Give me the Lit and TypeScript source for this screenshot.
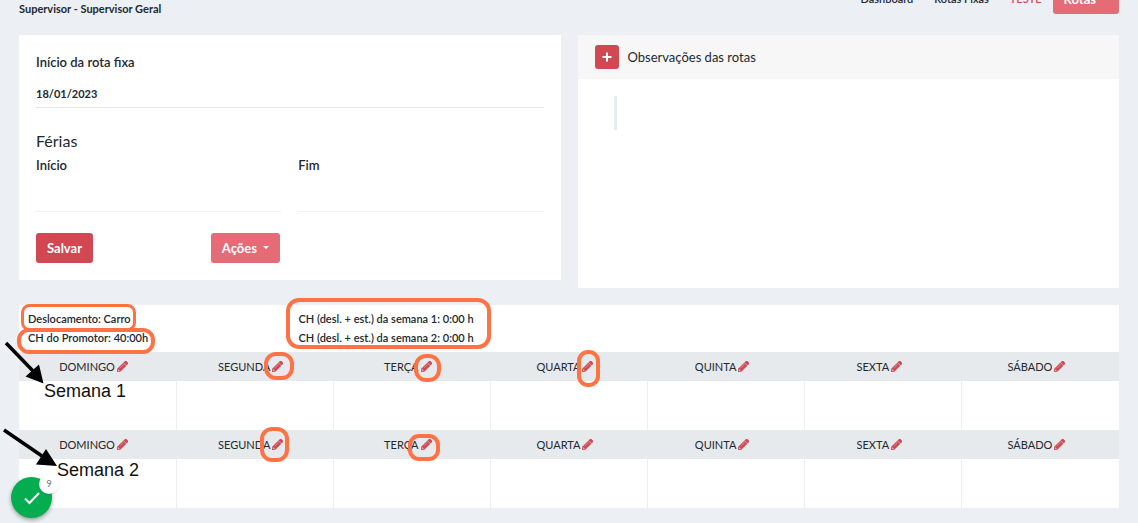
import { LitElement, html, css, svg } from "lit";
import { customElement } from "lit/decorators.js";

const DAYS = ["DOMINGO", "SEGUNDA", "TERÇA", "QUARTA", "QUINTA", "SEXTA", "SÁBADO"];

// Highlight rings: x, y, width, height, radius, stroke
const RINGS = [
  [22.5, 305.5, 112, 24, 7, 3],
  [19, 330, 134, 22, 10, 4],
  [288, 300, 201, 47, 11, 4],
  [266, 354, 26, 24, 10, 4],
  [416, 356, 23, 24, 10, 4],
  [579, 352, 19, 33, 9, 4],
  [262, 429, 25, 31, 10, 4],
  [410, 436, 28, 23, 9, 4],
];

const pencil = svg`<svg class="pencil" viewBox="0 0 512 512" aria-hidden="true"><path fill="currentColor" d="M498 142l-46 46c-5 5-12 5-17 0L324 77c-5-5-5-12 0-17l46-46c19-19 49-19 68 0l60 60c19 19 19 49 0 68zM284 100L22 362 .4 484c-3 16 11 31 28 28l121-21 263-263c5-5 5-12 0-17L301 100c-5-5-12-5-17 0zM124 340c-6-6-6-14 0-20l154-154c6-6 14-6 20 0s6 14 0 20L144 340c-6 5-15 5-20 0zM88 424h48v36l-64 12-32-32 12-64h36z"/></svg>`;

@customElement("app-root")
export class AppRoot extends LitElement {
  static styles = css`
    * { box-sizing: border-box; }
    :host {
      display: block;
      position: relative;
      min-height: 100vh;
      overflow: hidden;
      background: #ecf0f5;
      color: #23282d;
      font-family: Lato, "Noto Sans", sans-serif;
      font-size: 12px;
      line-height: 16px;
    }
    button, input { font: inherit; color: inherit; }
    button { cursor: pointer; }
    .page { padding: 0 19px 16px; }
    .top {
      display: flex;
      justify-content: space-between;
      align-items: flex-end;
      margin-top: -16px;
      height: 33px;
      margin-bottom: 18px;
    }
    .title { margin: 0; font-size: 11px; line-height: 16px; font-weight: 700; }
    .nav { display: flex; align-items: center; align-self: flex-start; }
    .crumbs {
      display: flex;
      gap: 9px;
      margin: 0 11px 0 0;
      padding: 0;
      list-style: none;
      font-size: 11px;
      line-height: 18px;
      font-weight: 600;
    }
    .crumbs a { color: inherit; text-decoration: none; }
    .crumbs .current { color: #d14853; }
    .dot { color: #b8bfc8; font-weight: 400; }
    .btn {
      display: inline-flex;
      align-items: center;
      justify-content: center;
      height: 30px;
      min-width: 57px;
      padding: 0 11px;
      border: 0;
      border-radius: 3px;
      background: #d14853;
      color: #fff;
      font-size: 13px;
      font-weight: 700;
    }
    .btn.light { background: #e56b76; }
    .caret {
      margin-left: 6px;
      margin-bottom: 2px;
      border: 3px solid transparent;
      border-top-color: currentColor;
      border-bottom: 0;
    }
    .cards {
      display: grid;
      grid-template-columns: 1fr 1fr;
      gap: 17px;
      align-items: start;
    }
    .card { background: #fff; }
    .form { padding: 19px 17px 17px; }
    .field { display: flex; flex-direction: column; }
    .field label { font-size: 13px; font-weight: 600; }
    .field input {
      width: 100%;
      min-width: 0;
      height: 28px;
      margin-top: 10px;
      padding: 0;
      border: 0;
      border-bottom: 1px solid #e6e8eb;
      background: none;
      font-size: 11px;
      font-weight: 700;
      outline: 0;
    }
    .subtitle { margin: 23px 0 6px; font-size: 16px; line-height: 20px; font-weight: 400; }
    .pair { display: grid; grid-template-columns: 1fr 1fr; gap: 17px; }
    .pair .field input { height: 29px; border-color: #f1f2f4; }
    .actions {
      display: grid;
      grid-template-columns: repeat(3, 1fr);
      gap: 17px;
      justify-items: start;
      margin-top: 21px;
    }
    .notes { height: 253px; }
    .notes-head {
      display: flex;
      align-items: center;
      gap: 9px;
      height: 44px;
      padding: 0 17px;
      background: #f7f7f7;
    }
    .notes-head h2 { margin: 0; font-size: 13px; font-weight: 400; }
    .plus { width: 24px; min-width: 24px; height: 24px; padding: 0; }
    .plus svg { width: 10px; height: 10px; }
    .quote { height: 34px; margin: 17px 36px; border-left: 3px solid #e9ecef; }
    .schedule { margin-top: 17px; }
    .summary {
      display: grid;
      grid-template-columns: 1fr 3fr;
      padding: 4px 9px 5px;
      font-size: 11px;
      line-height: 19px;
      font-weight: 600;
    }
    .summary p { margin: 0; }
    table { width: 100%; border-collapse: collapse; table-layout: fixed; }
    th {
      height: 29px;
      padding: 0 8px 0 0;
      background: #e7eaed;
      font-size: 11px;
      font-weight: 400;
      text-align: center;
      white-space: nowrap;
    }
    td { height: 49px; padding: 0; border-left: 1px solid #eeeff1; }
    td:first-child { border-left: 0; }
    .edit { margin-left: 2px; padding: 0; border: 0; background: none; color: #d14853; line-height: 11px; }
    .pencil { display: block; width: 11px; height: 11px; }
    .pencil path { stroke: currentColor; stroke-width: 24; }
    .day { display: inline-flex; align-items: center; }
    .marks { position: absolute; left: 0; top: 0; width: 1138px; height: 523px; pointer-events: none; }
    .mark {
      position: absolute;
      color: #111;
      font: 18px/22px "Liberation Sans", Arial, sans-serif;
      white-space: nowrap;
    }
    .week1 { left: 44px; top: 380px; }
    .week2 { left: 57px; top: 459px; }
    .fab {
      position: absolute;
      left: 11px;
      top: 477px;
      display: flex;
      align-items: center;
      justify-content: center;
      width: 41px;
      height: 41px;
      padding: 0;
      border: 0;
      border-radius: 50%;
      background: #04ad50;
      box-shadow: 0 2px 4px rgba(0, 0, 0, 0.35);
    }
    .fab svg { width: 16px; height: 14px; }
    .badge {
      position: absolute;
      right: -7px;
      top: -3px;
      width: 20px;
      height: 20px;
      border-radius: 50%;
      background: #fff;
      color: #66696d;
      font-size: 9px;
      line-height: 20px;
      text-align: center;
      box-shadow: 0 1px 2px rgba(0, 0, 0, 0.12);
    }
  `;

  private week(label: string) {
    return html`
      <table aria-label=${label}>
        <thead>
          <tr>${DAYS.map((d) => html`<th scope="col"><span class="day">${d}<button class="edit" aria-label="Editar">${pencil}</button></span></th>`)}</tr>
        </thead>
        <tbody>
          <tr>${DAYS.map(() => html`<td></td>`)}</tr>
        </tbody>
      </table>`;
  }

  render() {
    return html`
      <main class="page">
        <header class="top">
          <h1 class="title">Supervisor - Supervisor Geral</h1>
          <nav class="nav">
            <ol class="crumbs">
              <li><a href="#">Dashboard</a></li>
              <li class="dot">·</li>
              <li><a href="#">Rotas Fixas</a></li>
              <li class="dot">·</li>
              <li class="current">TESTE</li>
            </ol>
            <button class="btn light">Rotas<span class="caret"></span></button>
          </nav>
        </header>

        <div class="cards">
          <form class="card form">
            <div class="field">
              <label for="start">Início da rota fixa</label>
              <input id="start" type="text" value="18/01/2023" />
            </div>
            <h2 class="subtitle">Férias</h2>
            <div class="pair">
              <div class="field"><label for="from">Início</label><input id="from" type="text" /></div>
              <div class="field"><label for="to">Fim</label><input id="to" type="text" /></div>
            </div>
            <div class="actions">
              <button class="btn" type="button">Salvar</button>
              <button class="btn light" type="button">Ações<span class="caret"></span></button>
            </div>
          </form>

          <section class="card notes">
            <div class="notes-head">
              <button class="btn plus" aria-label="Adicionar">
                <svg viewBox="0 0 10 10"><path d="M5 0.5v9M0.5 5h9" stroke="#fff" stroke-width="2" /></svg>
              </button>
              <h2>Observações das rotas</h2>
            </div>
            <div class="quote"></div>
          </section>
        </div>

        <section class="card schedule">
          <div class="summary">
            <div>
              <p>Deslocamento: Carro</p>
              <p>CH do Promotor: 40:00h</p>
            </div>
            <div>
              <p>CH (desl. + est.) da semana 1: 0:00 h</p>
              <p>CH (desl. + est.) da semana 2: 0:00 h</p>
            </div>
          </div>
          ${this.week("Semana 1")} ${this.week("Semana 2")}
        </section>
      </main>

      <svg class="marks" viewBox="0 0 1138 523" aria-hidden="true">
        ${RINGS.map(([x, y, w, h, r, s]) => svg`<rect x=${x} y=${y} width=${w} height=${h} rx=${r} fill="none" stroke="#ff7243" stroke-width=${s} />`)}
        <path d="M6 343L34 372M4 430L42 456" stroke="#000" stroke-width="3.5" />
        <path d="M43.5 383.5L25.5 376.5L39 364.5zM57 466L36 464.5L46 449z" />
      </svg>
      <span class="mark week1">Semana 1</span>
      <span class="mark week2">Semana 2</span>
      <button class="fab" aria-label="Tarefas">
        <svg viewBox="0 0 16 14"><path d="M1 7.5L5.5 12L15 2" fill="none" stroke="#fff" stroke-width="2" /></svg>
        <span class="badge">9</span>
      </button>
    `;
  }
}
